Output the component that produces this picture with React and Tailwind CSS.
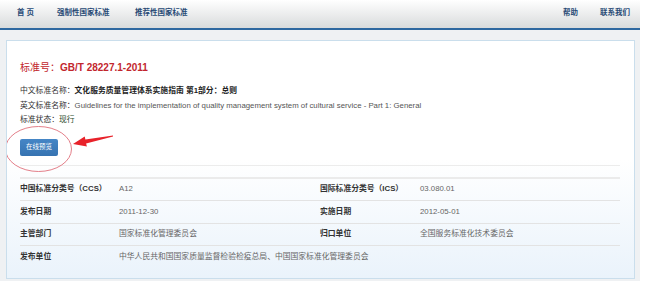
import React from 'react';

const rows = [
  { l1: '中国标准分类号（CCS）', v1: 'A12', l2: '国际标准分类号（ICS）', v2: '03.080.01' },
  { l1: '发布日期', v1: '2011-12-30', l2: '实施日期', v2: '2012-05-01' },
  { l1: '主管部门', v1: '国家标准化管理委员会', l2: '归口单位', v2: '全国服务标准化技术委员会' },
];

const App = () => {
  return (
    <div className="w-[669px] h-[292px] bg-white overflow-hidden font-['Liberation_Sans','Noto_Sans_CJK_SC',sans-serif]">
      <div className="w-[640px]">
        {/* top nav */}
        <div className="h-[30px] flex items-center pl-[17px] pb-[2px] bg-linear-to-b from-white to-[#d9dbdc] border-b-2 border-[#2f68a0] text-[7.5px] font-bold text-[#284a75]">
          <span className="w-[40px]">首 页</span>
          <span className="w-[78px]">强制性国家标准</span>
          <span>推荐性国家标准</span>
          <span className="ml-auto w-[37px]">帮助</span>
          <span className="w-[40px]">联系我们</span>
        </div>

        <div className="bg-[#eff1f3] pt-[10px] pl-[6px] pr-[5px] pb-[2px]">
          <div className="relative h-[239px] border border-[#cadeec] bg-linear-to-b from-white via-white to-[#eaf3fb] pl-[13px] pr-[14px] pt-[19px]">
            <div className="h-[14px] flex items-center text-[#c2262d] text-[10px]">
              <span className="w-[40px]">标准号：</span>
              <span className="font-bold">GB/T 28227.1-2011</span>
            </div>

            <div className="mt-[10px] text-[7.8px] text-[#333] leading-[14.5px]">
              <div>
                中文标准名称：<span className="font-bold text-[#222]">文化服务质量管理体系实施指南 第1部分：总则</span>
              </div>
              <div>
                英文标准名称：<span className="text-[#555]">Guidelines for the implementation of quality management system of cultural service - Part 1: General</span>
              </div>
              <div>
                标准状态：<span className="text-[#2b4a2b]">现行</span>
              </div>
            </div>

            <button className="mt-[11px] w-[38px] h-[17px] rounded-[2px] bg-linear-to-b from-[#4586c6] to-[#3673b1] text-white text-[6.5px] flex items-center justify-center">
              在线预览
            </button>

            <div className="mt-[9px] h-px bg-[#ececec]" />

            <div className="mt-[11px] border-t-2 border-[#ebebeb] text-[7.8px]">
              {rows.map((r) => (
                <div key={r.l1} className="grid grid-cols-[99px_201px_100px_1fr] h-[22.5px] items-center border-b border-[#e3e3e3]">
                  <span className="font-bold text-[#333]">{r.l1}</span>
                  <span className="text-[#666]">{r.v1}</span>
                  <span className="font-bold text-[#333]">{r.l2}</span>
                  <span className="text-[#666]">{r.v2}</span>
                </div>
              ))}
              <div className="grid grid-cols-[99px_1fr] h-[22.5px] items-center">
                <span className="font-bold text-[#333]">发布单位</span>
                <span className="text-[#666]">中华人民共和国国家质量监督检验检疫总局、中国国家标准化管理委员会</span>
              </div>
            </div>

            {/* annotation: circle + arrow */}
            <svg className="absolute left-0 top-0 pointer-events-none" width="629" height="239" viewBox="0 0 629 239">
              <ellipse cx="31.5" cy="108" rx="33" ry="22.5" fill="none" stroke="#e0707c" strokeWidth="0.9" />
              <polygon
                points="66,103 77.7,95.4 78.4,98.6 106,94.4 106,95.6 79.1,102.4 79.9,105.6"
                fill="#e8222a"
              />
            </svg>
          </div>
        </div>
      </div>
    </div>
  );
};

export default App;
